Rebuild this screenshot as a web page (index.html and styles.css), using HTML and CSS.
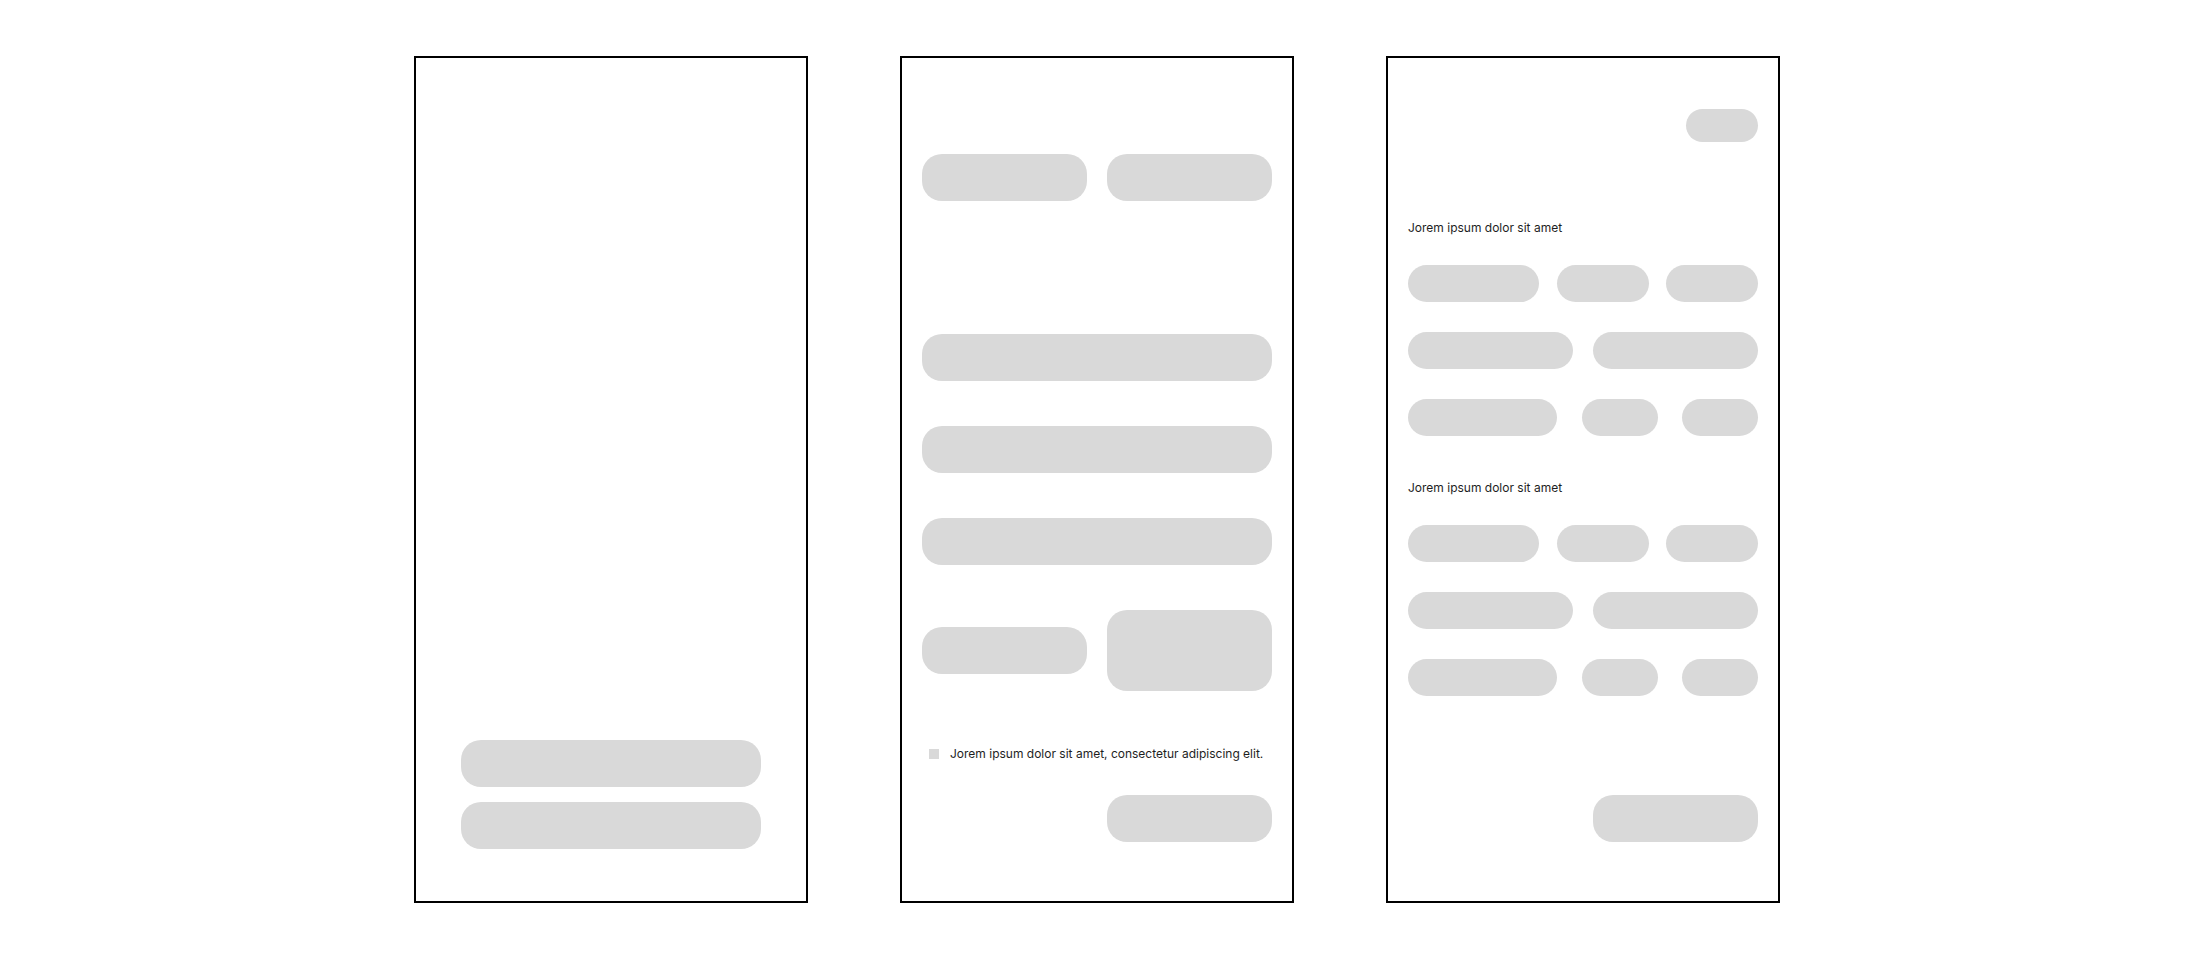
FILE: index.html
```html
<!DOCTYPE html>
<html>
<head>
<title>Wireframes</title>
<link rel="stylesheet" href="styles.css">
</head>
<body>
  <div id="screens">
    <div class="screen" id="welcome">
      <div class="block wide"></div>
      <div class="block wide"></div>
    </div>

    <div class="screen" id="form">
      <div class="row pair">
        <div class="block half"></div>
        <div class="block half"></div>
      </div>
      <div class="fields">
        <div class="block full"></div>
        <div class="block full"></div>
        <div class="block full"></div>
      </div>
      <div class="row pair middle">
        <div class="block half"></div>
        <div class="block half tall"></div>
      </div>
      <div class="check">
        <span class="box"></span>
        <span class="label">Jorem ipsum dolor sit amet, consectetur adipiscing elit.</span>
      </div>
      <div class="row end">
        <div class="block half"></div>
      </div>
    </div>

    <div class="screen" id="filters">
      <div class="row end">
        <div class="pill tiny"></div>
      </div>
      <div class="group first">
        <p class="title">Jorem ipsum dolor sit amet</p>
        <div class="row spread">
          <div class="pill w131"></div>
          <div class="pill w92"></div>
          <div class="pill w92"></div>
        </div>
        <div class="row spread">
          <div class="pill w165"></div>
          <div class="pill w165"></div>
        </div>
        <div class="row spread">
          <div class="pill w149"></div>
          <div class="pill w76"></div>
          <div class="pill w76"></div>
        </div>
      </div>
      <div class="group">
        <p class="title">Jorem ipsum dolor sit amet</p>
        <div class="row spread">
          <div class="pill w131"></div>
          <div class="pill w92"></div>
          <div class="pill w92"></div>
        </div>
        <div class="row spread">
          <div class="pill w165"></div>
          <div class="pill w165"></div>
        </div>
        <div class="row spread">
          <div class="pill w149"></div>
          <div class="pill w76"></div>
          <div class="pill w76"></div>
        </div>
      </div>
      <div class="row end bottom">
        <div class="block half"></div>
      </div>
    </div>
  </div>
</body>
</html>
```

FILE: styles.css
```css
body {
margin: 0;
background-color: #ffffff;
font-family: Inter, "Noto Sans", sans-serif;
color: #1e1e1e;
}

#screens {
display: flex;
gap: 92px;
padding: 56px 0 0 414px;
}

.screen {
box-sizing: border-box;
width: 394px;
height: 847px;
border: 2px solid #000000;
display: flex;
flex-direction: column;
}

.block {
background-color: #d9d9d9;
height: 47px;
border-radius: 20px;
}

.pill {
background-color: #d9d9d9;
height: 37px;
border-radius: 19px;
}

.row {
display: flex;
}

/* first screen */
#welcome {
justify-content: flex-end;
align-items: center;
gap: 15px;
padding-bottom: 52px;
}

.wide {
width: 300px;
}

/* second screen */
#form {
padding: 96px 20px 0 20px;
}

.pair {
gap: 20px;
}

.half {
width: 165px;
}

.tall {
height: 81px;
}

.middle {
align-items: center;
margin-top: 45px;
}

.fields {
display: flex;
flex-direction: column;
gap: 45px;
margin-top: 133px;
}

.full {
width: 350px;
}

.check {
display: flex;
align-items: center;
gap: 11px;
height: 16px;
margin-top: 55px;
padding-left: 7px;
font-size: 12px;
line-height: 16px;
white-space: nowrap;
}

.box {
width: 10px;
height: 10px;
background-color: #d9d9d9;
}

.end {
justify-content: flex-end;
}

#form .end {
margin-top: 33px;
}

/* third screen */
#filters {
padding: 51px 20px 0 20px;
}

.tiny {
width: 72px;
height: 33px;
border-radius: 17px;
}

.group {
display: flex;
flex-direction: column;
gap: 30px;
margin-top: 44px;
}

.group.first {
margin-top: 78px;
}

.group .title {
margin: 0 0 -1px 0;
font-size: 12px;
line-height: 16px;
}

.spread {
justify-content: space-between;
}

.w165 {
width: 165px;
}

.w149 {
width: 149px;
}

.w131 {
width: 131px;
}

.w92 {
width: 92px;
}

.w76 {
width: 76px;
}

#filters .bottom {
margin-top: 99px;
}
```
